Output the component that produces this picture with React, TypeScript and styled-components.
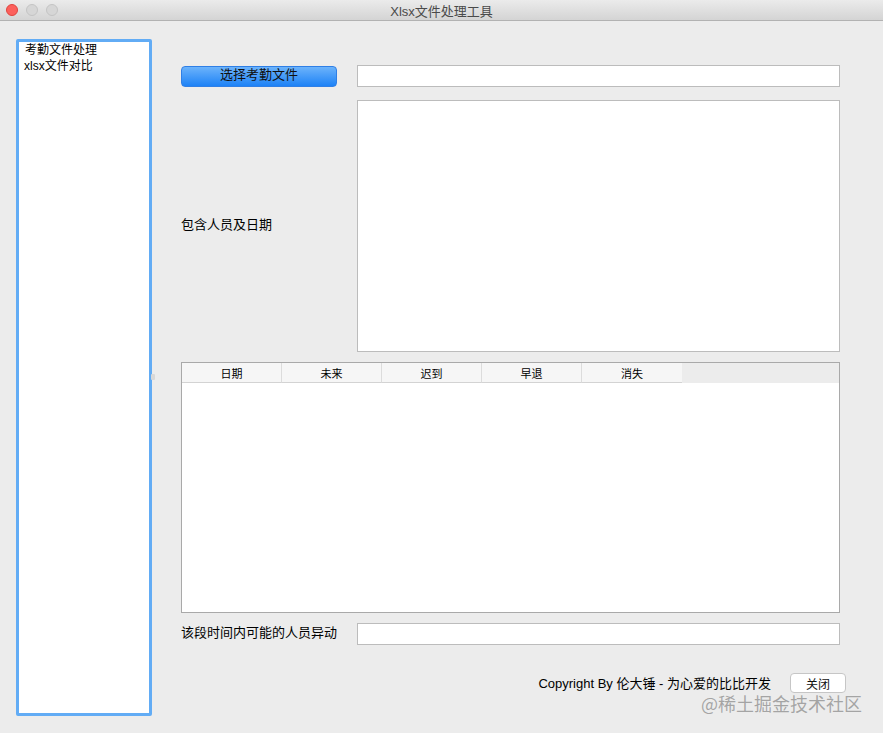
import React from "react";
import styled, { createGlobalStyle } from "styled-components";

const Global = createGlobalStyle`
  html, body { margin: 0; padding: 0; background: #ececec; }
  body { font-family: "Liberation Sans", "Noto Sans CJK SC", sans-serif; font-size: 12px; color: #000; }
  * { box-sizing: border-box; }
`;

const Window = styled.div`
  width: 883px;
  height: 733px;
  display: flex;
  flex-direction: column;
  background: #ececec;
  position: relative;
  overflow: hidden;
`;

const TitleBar = styled.div`
  height: 21px;
  flex: none;
  display: flex;
  align-items: center;
  position: relative;
  background: linear-gradient(#ebebeb, #d4d4d4);
  border-bottom: 1px solid #b2b2b2;
  padding-left: 6px;
  gap: 8px;
`;

const Light = styled.span<{ $c: string; $b: string }>`
  width: 12px;
  height: 12px;
  border-radius: 50%;
  background: ${(p) => p.$c};
  border: 1px solid ${(p) => p.$b};
`;

const Title = styled.div`
  position: absolute;
  left: 0;
  right: 0;
  top: 0;
  bottom: 0;
  display: flex;
  align-items: center;
  justify-content: center;
  font-size: 13px;
  color: #4a4a4a;
  pointer-events: none;
`;

const Body = styled.div`
  flex: 1;
  display: flex;
  padding: 18px 0 0 16px;
`;

const ListBox = styled.div`
  width: 136px;
  height: 677px;
  flex: none;
  background: #fff;
  border: 3px solid #62acf5;
  border-radius: 2px;
  padding: 0 0 0 5px;
  display: flex;
  flex-direction: column;
  position: relative;
`;

const ListItem = styled.div<{ $indent?: number }>`
  height: 16px;
  line-height: 16px;
  font-size: 12px;
  padding-left: ${(p) => p.$indent ?? 0}px;
  white-space: nowrap;
`;

const Handle = styled.div`
  position: absolute;
  right: -6px;
  top: 332px;
  width: 4px;
  height: 6px;
  background: #d8d8d8;
  border-radius: 1px;
`;

const Main = styled.div`
  margin-left: 29px;
  padding-top: 26px;
  width: 665px;
  display: flex;
  flex-direction: column;
`;

const Row = styled.div<{ $top?: number }>`
  display: grid;
  grid-template-columns: 176px 483px;
  align-items: center;
  margin-top: ${(p) => p.$top ?? 0}px;
`;

const BlueButton = styled.button`
  width: 156px;
  height: 21px;
  border: 1px solid #2f7fe6;
  border-radius: 4px;
  background: linear-gradient(#6cb3fb, #1d82f6);
  font-family: "Liberation Sans", "Noto Sans CJK SC", sans-serif;
  font-size: 13px;
  color: #111;
  padding: 0 0 2px;
  line-height: 16px;
`;

const TextInput = styled.div<{ $h: number }>`
  height: ${(p) => p.$h}px;
  background: #fff;
  border: 1px solid #bcbcbc;
`;

const Label = styled.div`
  font-size: 13px;
  line-height: 16px;
  margin-top: -3px;
`;

const Table = styled.div`
  margin-top: 10px;
  width: 659px;
  height: 251px;
  background: #fff;
  border: 1px solid #a9a9a9;
  display: flex;
  flex-direction: column;
`;

const HeaderRow = styled.div`
  height: 20px;
  display: flex;
  background: #ececec;
`;

const HeaderCell = styled.div<{ $last?: boolean }>`
  width: 100px;
  height: 20px;
  background: #f6f6f6;
  border-bottom: 1px solid #d3d3d3;
  border-right: ${(p) => (p.$last ? "none" : "1px solid #dcdcdc")};
  display: flex;
  align-items: center;
  justify-content: center;
  font-size: 11px;
  background-clip: padding-box;
  position: relative;
`;

const Footer = styled.div`
  margin-top: 28px;
  display: flex;
  align-items: center;
  justify-content: flex-end;
  gap: 19px;
  width: 665px;
`;

const Copyright = styled.div`
  font-size: 13px;
  margin-top: -2px;
`;

const CloseButton = styled.button`
  width: 56px;
  height: 20px;
  background: #fff;
  border: 1px solid #c6c6c6;
  border-radius: 4px;
  font-family: "Liberation Sans", "Noto Sans CJK SC", sans-serif;
  font-size: 12px;
  color: #111;
  padding: 0;
`;

const Watermark = styled.div`
  position: absolute;
  right: 21px;
  top: 694px;
  line-height: 18px;
  font-family: "Noto Sans CJK SC", sans-serif;
  font-size: 18px;
  color: rgba(140, 140, 140, 0.75);
`;

const columns = ["日期", "未来", "迟到", "早退", "消失"];

export default function App() {
  return (
    <>
      <Global />
      <Window>
        <TitleBar>
          <Light $c="#fc605c" $b="#e0443e" />
          <Light $c="#d6d6d6" $b="#c4c4c4" />
          <Light $c="#d6d6d6" $b="#c4c4c4" />
          <Title>Xlsx文件处理工具</Title>
        </TitleBar>
        <Body>
          <ListBox>
            <ListItem $indent={1}>考勤文件处理</ListItem>
            <ListItem>xlsx文件对比</ListItem>
            <Handle />
          </ListBox>
          <Main>
            <Row>
              <BlueButton>选择考勤文件</BlueButton>
              <TextInput $h={22} />
            </Row>
            <Row $top={13}>
              <Label>包含人员及日期</Label>
              <TextInput $h={252} />
            </Row>
            <Table>
              <HeaderRow>
                {columns.map((c, i) => (
                  <HeaderCell key={c} $last={i === columns.length - 1}>
                    {c}
                  </HeaderCell>
                ))}
              </HeaderRow>
            </Table>
            <Row $top={10}>
              <Label>该段时间内可能的人员异动</Label>
              <TextInput $h={22} />
            </Row>
            <Footer>
              <Copyright>Copyright By 伦大锤 - 为心爱的比比开发</Copyright>
              <CloseButton>关闭</CloseButton>
            </Footer>
          </Main>
        </Body>
        <Watermark>@稀土掘金技术社区</Watermark>
      </Window>
    </>
  );
}
